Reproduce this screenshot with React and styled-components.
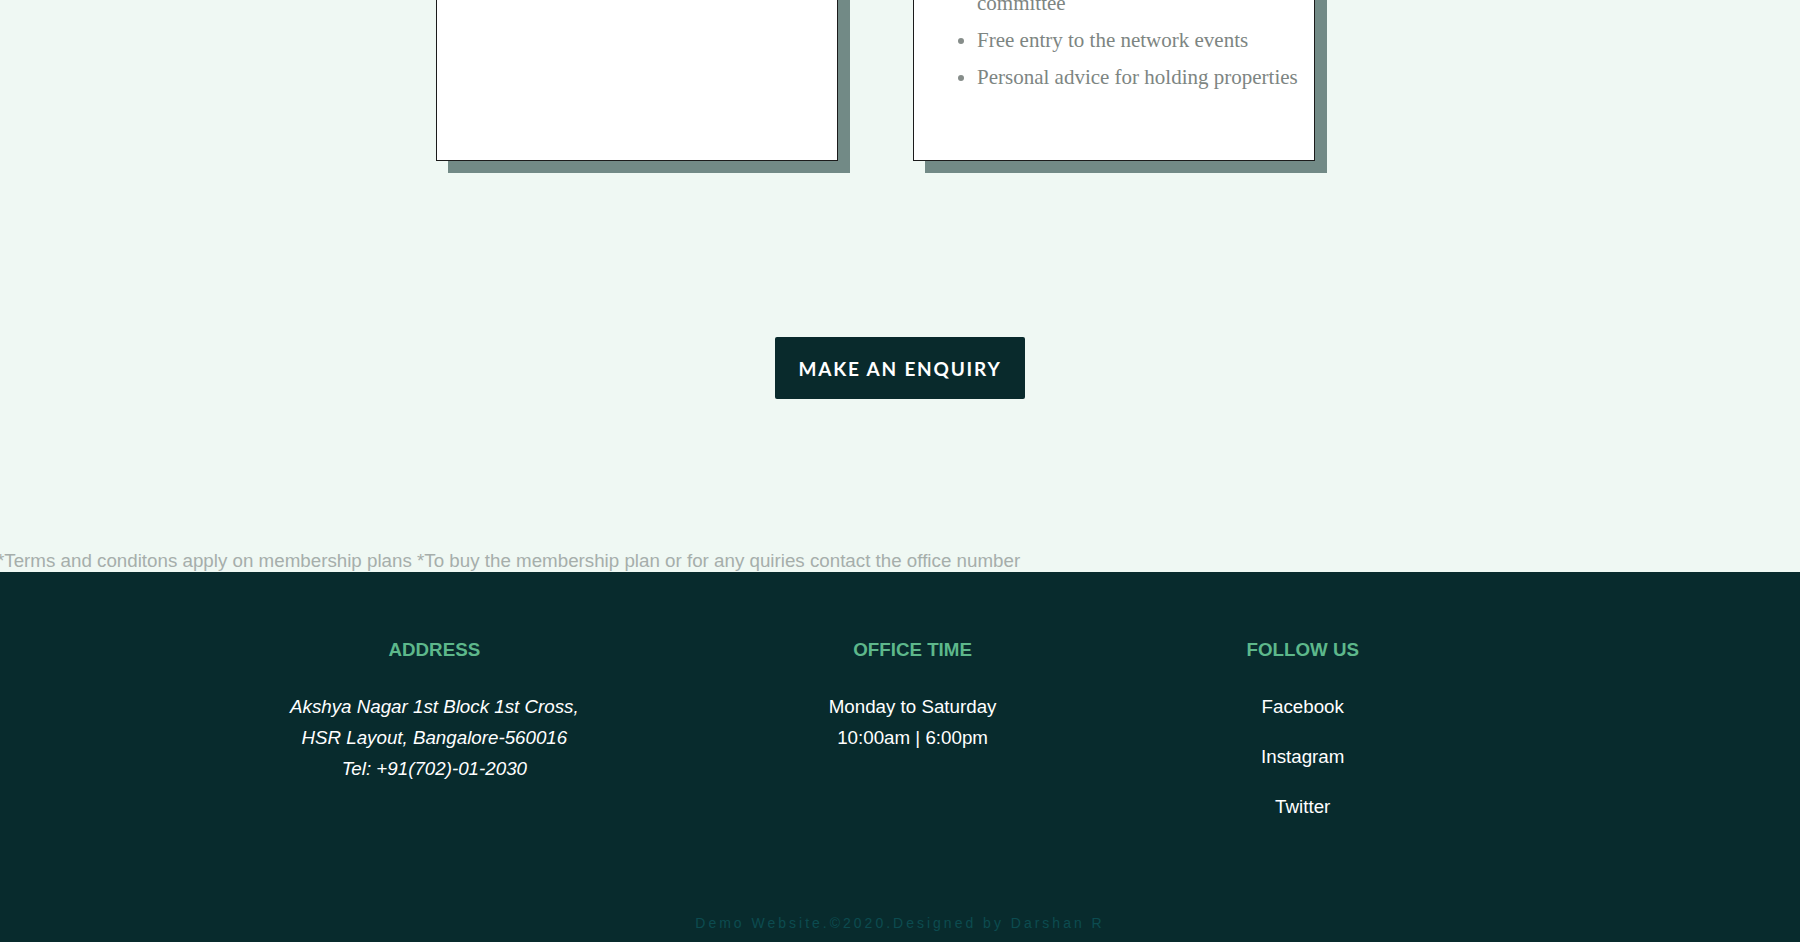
import React from "react";
import styled, { createGlobalStyle } from "styled-components";

const GlobalStyle = createGlobalStyle`
  html, body {
    margin: 0;
    padding: 0;
    background-color: #eff8f3;
    overflow: hidden;
  }
`;

const perks = [
  "Access to premium property listings",
  "Eligible to be part of the network",
  "Free entry to the network events",
  "Personal advice for holding properties",
];

const App = () => {
  return (
    <>
      <GlobalStyle />
      <Page>
        <CardsRow>
          <Card />
          <Card>
            <PerkList>
              <Perk>{perks[0]}</Perk>
              <Perk>
                {perks[1]}
                <br />
                committee
              </Perk>
              <Perk>{perks[2]}</Perk>
              <Perk>{perks[3]}</Perk>
            </PerkList>
          </Card>
        </CardsRow>
        <EnquiryWrap>
          <EnquiryButton type="button">MAKE AN ENQUIRY</EnquiryButton>
        </EnquiryWrap>
        <Terms>
          *Terms and conditons apply on membership plans *To buy the membership
          plan or for any quiries contact the office number
        </Terms>
        <Footer>
          <Columns>
            <Column>
              <Heading>ADDRESS</Heading>
              <Address>
                Akshya Nagar 1st Block 1st Cross,
                <br />
                HSR Layout, Bangalore-560016
                <br />
                Tel: +91(702)-01-2030
              </Address>
            </Column>
            <Column>
              <Heading>OFFICE TIME</Heading>
              <Plain>
                Monday to Saturday
                <br />
                10:00am | 6:00pm
              </Plain>
            </Column>
            <Column>
              <Heading>FOLLOW US</Heading>
              <Links>
                <Link href="#">Facebook</Link>
                <Link href="#">Instagram</Link>
                <Link href="#">Twitter</Link>
              </Links>
            </Column>
          </Columns>
          <Copyright>Demo Website.©2020.Designed by Darshan R</Copyright>
        </Footer>
      </Page>
    </>
  );
};

export default App;

const Page = styled.div`
  background-color: #eff8f3;
  font-family: "Liberation Sans", Arial, sans-serif;
  min-height: 942px;
`;

const CardsRow = styled.div`
  display: flex;
  gap: 75px;
  padding-left: 436px;
  margin-top: -200px;
`;

const Card = styled.div`
  box-sizing: border-box;
  width: 402px;
  height: 361px;
  background: #fff;
  border: 1px solid #1b1b1b;
  box-shadow: 12px 12px 0 #728a86;
  display: flex;
  flex-direction: column;
  justify-content: flex-end;
  padding: 0 4px 71px 10px;
`;

const PerkList = styled.ul`
  margin: 0;
  padding-left: 53px;
  font-family: "Liberation Serif", "Times New Roman", serif;
  font-size: 21px;
  color: #7d8582;
  list-style: disc;
`;

const Perk = styled.li`
  margin-top: 13px;
  line-height: 24px;
  white-space: nowrap;
  &::marker {
    color: #868d8a;
  }
`;

const EnquiryWrap = styled.div`
  display: flex;
  justify-content: center;
  padding-top: 176px;
`;

const EnquiryButton = styled.button`
  box-sizing: border-box;
  height: 62px;
  padding: 0 23px;
  background-color: #092a2c;
  border: none;
  border-radius: 2px;
  color: #ffffff;
  font-family: Lato, "Open Sans", sans-serif;
  font-weight: 700;
  font-size: 19px;
  letter-spacing: 1.8px;
  cursor: pointer;
`;

const Terms = styled.p`
  margin: 151px 0 0 -3px;
  font-size: 18.75px;
  line-height: 22px;
  color: #a6aeab;
  white-space: nowrap;
`;

const Footer = styled.footer`
  background-color: #082b2d;
  padding-top: 67px;
  padding-bottom: 10px;
  min-height: 370px;
  box-sizing: border-box;
  display: flex;
  flex-direction: column;
`;

const Columns = styled.div`
  display: flex;
  gap: 250px;
  padding-left: 290px;
  flex: 1;
`;

const Column = styled.div`
  display: flex;
  flex-direction: column;
  align-items: center;
  text-align: center;
`;

const Heading = styled.h3`
  margin: 0 0 30px;
  font-size: 18.75px;
  line-height: 22px;
  font-weight: 700;
  color: #5db88b;
`;

const Address = styled.p`
  margin: 0;
  font-size: 18.75px;
  line-height: 31px;
  font-style: italic;
  color: #ffffff;
`;

const Plain = styled.p`
  margin: 0;
  font-size: 18.75px;
  line-height: 31px;
  color: #ffffff;
`;

const Links = styled.div`
  display: flex;
  flex-direction: column;
  align-items: center;
  gap: 19px;
`;

const Link = styled.a`
  font-size: 18.75px;
  line-height: 31px;
  color: #ffffff;
  text-decoration: none;
`;

const Copyright = styled.p`
  margin: 0;
  text-align: center;
  font-size: 14px;
  line-height: 18px;
  letter-spacing: 3px;
  color: #0c4b50;
`;
